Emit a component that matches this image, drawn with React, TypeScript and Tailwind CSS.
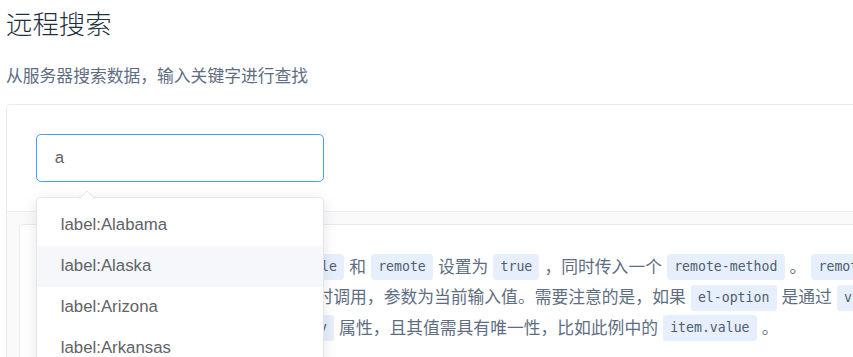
import React from "react";

const cjk = '"Noto Sans CJK SC", "Noto Sans", sans-serif';
const latin = '"Liberation Sans", Arial, "Noto Sans CJK SC", sans-serif';

function C({ children }: { children: React.ReactNode }) {
  return (
    <code className="inline-block h-[26px] leading-[26px] align-middle mx-[5px] px-[7.2px] rounded-[3.6px] bg-[#e6effb] text-[#4f5d72] text-[13.2px] font-['DejaVu_Sans_Mono',monospace] translate-y-[-1px]">
      {children}
    </code>
  );
}

const items = [
  "label:Alabama",
  "label:Alaska",
  "label:Arizona",
  "label:Arkansas",
  "label:California",
];

export default function App() {
  return (
    <div className="w-[853px] h-[357px] overflow-hidden bg-white relative" style={{ fontFamily: cjk }}>
      <div className="pl-[6px] w-[1200px]">
        <h3 className="mt-[3px] leading-[40px] text-[26.4px] font-light text-[#1f2f3d]">远程搜索</h3>
        <p className="mt-[20px] leading-[25.2px] text-[16.8px] text-[#5e6d82]">从服务器搜索数据，输入关键字进行查找</p>
        <div className="mt-[16px] w-[1100px] border border-[#ebebeb] rounded-[3.6px]">
          <div className="p-[28.8px] pb-[28.8px]">
            <div className="relative w-[288px]">
              <input
                readOnly
                value="a"
                className="block w-[288px] h-[48px] border border-[#409eff] rounded-[4.8px] pl-[18px] text-[16.8px] text-[#606266] outline-none bg-white"
                style={{ fontFamily: latin }}
              />
              <div className="absolute left-0 top-[63px] w-[288px] z-10 bg-white border border-[#e4e7ed] rounded-[4.8px] shadow-[0_2px_14px_0_rgba(0,0,0,0.1)]">
                <svg className="absolute left-[42px] top-[-8px]" width="16" height="9" viewBox="0 0 16 9">
                  <polygon points="0,9 8,1 16,9" fill="#ffffff" stroke="#e4e7ed" strokeWidth="1" />
                  <rect x="0" y="8.5" width="16" height="1" fill="#ffffff" />
                </svg>
                <ul className="py-[7.2px]">
                  {items.map((it, i) => (
                    <li
                      key={it}
                      className={
                        "h-[40.8px] leading-[40.8px] pl-[24px] text-[16.8px] text-[#606266] " +
                        (i === 1 ? "bg-[#f5f7fa]" : "bg-white")
                      }
                      style={{ fontFamily: latin }}
                    >
                      {it}
                    </li>
                  ))}
                </ul>
              </div>
            </div>
          </div>
          <div className="border-t border-[#eaeefb] bg-[#fafafa] pt-[12px] pl-[12px] pb-[12px]">
            <div className="bg-white border border-[#ebebeb] rounded-[3.6px] pt-[26px] pb-[24px] pl-[24px] text-[16.8px] text-[#5e6d82] leading-[30px] whitespace-nowrap">
              <div>
                为了启用远程搜索，需要将<C>filterable</C>和<C>remote</C>设置为<C>true</C>，同时传入一个<C>remote-method</C>。<C>remote-method</C>为一个
              </div>
              <div>
                <C>Function</C>，它会在输入值发生变化时调用，参数为当前输入值。需要注意的是，如果<C>el-option</C>是通过<C>v-for</C>指令渲染出来
              </div>
              <div>
                的，此时需要为<C>el-option</C>添加<C>key</C>属性，且其值需具有唯一性，比如此例中的<C>item.value</C>。
              </div>
            </div>
          </div>
        </div>
      </div>
    </div>
  );
}
